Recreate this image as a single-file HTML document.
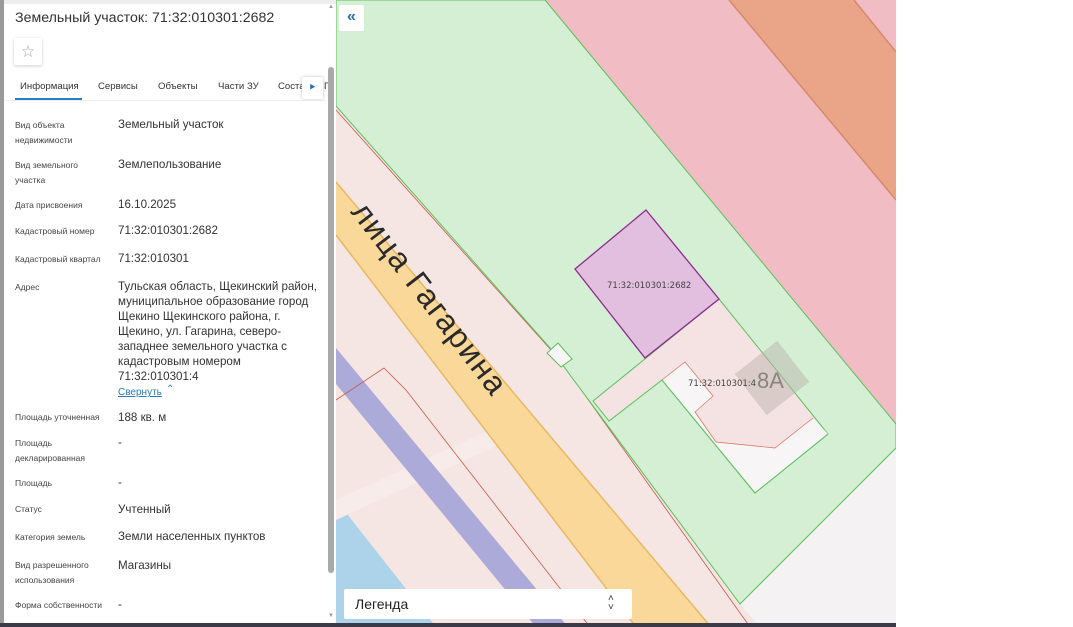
<!DOCTYPE html>
<html><head><meta charset="utf-8"><style>
*{margin:0;padding:0;box-sizing:border-box}
body{width:1073px;height:627px;overflow:hidden;background:#fff;font-family:"Liberation Sans","Noto Sans CJK SC",sans-serif;position:relative}
.p{position:absolute;white-space:nowrap}
.l{font-size:8.5px;color:#444;line-height:15px;left:15px}
.v{font-size:11.6px;color:#333;line-height:15px;left:118px}
.t{font-size:9.6px;color:#333;top:81px}
</style></head><body>
<div class="p" style="left:0;top:0;width:4px;height:627px;background:#9a9a9a"></div>
<div class="p" style="left:4px;top:0;width:332px;height:4px;background:#eee"></div>
<div class="p" style="left:15px;top:10px;font-size:14.2px;color:#333">Земельный участок: 71:32:010301:2682</div>
<div class="p" style="left:14px;top:38px;width:28px;height:27px;background:#fff;box-shadow:0 1px 3px rgba(0,0,0,.2);border-radius:2px;color:#aaa;font-size:13px;text-align:center;line-height:27px">☆</div>
<div class="p t" style="left:20px">Информация</div>
<div class="p t" style="left:98px">Сервисы</div>
<div class="p t" style="left:158px">Объекты</div>
<div class="p t" style="left:218px">Части ЗУ</div>
<div class="p t" style="left:278px">Соста</div>
<div class="p t" style="left:324px">Г</div>
<div class="p" style="left:302px;top:77px;width:21px;height:22px;background:#fff;box-shadow:0 0 3px rgba(0,0,0,.25);border-radius:2px;color:#2b6cb0;font-size:6px;text-align:center;line-height:22px">▶</div>
<div class="p" style="left:4px;top:100px;width:322px;height:1px;background:#eee"></div>
<div class="p" style="left:15px;top:98px;width:67px;height:2px;background:#2b7bc0"></div>
<div class="p" style="left:328px;top:4px;color:#999;font-size:6px">▲</div>
<div class="p" style="left:328px;top:67px;width:6px;height:506px;background:#a9a9a9;border-radius:3px"></div>
<div class="p" style="left:328px;top:613px;color:#999;font-size:6px">▼</div>

<div class="p l" style="top:118px">Вид объекта<br>недвижимости</div><div class="p v" style="top:117px">Земельный участок</div>
<div class="p l" style="top:158px">Вид земельного<br>участка</div><div class="p v" style="top:157px">Землепользование</div>
<div class="p l" style="top:198px">Дата присвоения</div><div class="p v" style="top:197px">16.10.2025</div>
<div class="p l" style="top:224px">Кадастровый номер</div><div class="p v" style="top:223px">71:32:010301:2682</div>
<div class="p l" style="top:252px">Кадастровый квартал</div><div class="p v" style="top:251px">71:32:010301</div>
<div class="p l" style="top:280px">Адрес</div><div class="p v" style="top:279px">Тульская область, Щекинский район,<br>муниципальное образование город<br>Щекино Щекинского района, г.<br>Щекино, ул. Гагарина, северо-<br>западнее земельного участка с<br>кадастровым номером<br>71:32:010301:4</div>
<div class="p" style="left:118px;top:385px;font-size:10px;color:#2b7bc0;text-decoration:underline;line-height:15px">Свернуть</div><div class="p" style="left:166px;top:384px;font-size:10px;color:#2b7bc0">⌃</div>
<div class="p l" style="top:410px">Площадь уточненная</div><div class="p v" style="top:410px">188 кв. м</div>
<div class="p l" style="top:436px">Площадь<br>декларированная</div><div class="p v" style="top:435px">-</div>
<div class="p l" style="top:476px">Площадь</div><div class="p v" style="top:475px">-</div>
<div class="p l" style="top:502px">Статус</div><div class="p v" style="top:502px">Учтенный</div>
<div class="p l" style="top:530px">Категория земель</div><div class="p v" style="top:529px">Земли населенных пунктов</div>
<div class="p l" style="top:558px">Вид разрешенного<br>использования</div><div class="p v" style="top:558px">Магазины</div>
<div class="p l" style="top:598px">Форма собственности</div><div class="p v" style="top:597px">-</div>

<svg class="p" style="left:0;top:0" width="1073" height="627" viewBox="0 0 1073 627">
<defs><clipPath id="m"><rect x="336" y="0" width="560" height="623"/></clipPath></defs>
<g clip-path="url(#m)">
<rect x="336" y="0" width="560" height="627" fill="#f5e6e3"/>
<polygon points="545,0 896,0 896,424" fill="#f2bcc4"/>
<polygon points="729,0 854,0 896,52 896,200" fill="#eaa588"/>
<line x1="729" y1="0" x2="896" y2="200" stroke="#d48a6a" stroke-width="1.5"/>
<line x1="854" y1="0" x2="896" y2="52" stroke="#d48a6a" stroke-width="1.5"/>
<polygon points="740,604 896,448 896,627 760,627" fill="#f4f2f2"/>
<polygon points="336,500 436,627 336,627" fill="#acd3ea"/>
<polygon points="336,500 490,430 496,446 336,520" fill="#f7ecea"/>
<polygon points="336,348 568,627 536,627 336,384" fill="#abaad8"/>
<polygon points="336,182 711,627 636,627 336,235" fill="#f9d89a"/>
<line x1="336" y1="182" x2="711" y2="627" stroke="#e8b860" stroke-width="1.5"/>
<line x1="336" y1="235" x2="636" y2="627" stroke="#e8b860" stroke-width="1.5"/>
<polyline points="336,400 384,368 406,390 590,627" fill="none" stroke="#c9584a" stroke-width="0.8"/>
<polyline points="336,110 560,360 750,627" fill="none" stroke="#c9584a" stroke-width="0.8"/>
<polygon points="336,0 545,0 896,424 896,448 740,604 550,348 336,106" fill="#d4efd4" stroke="#5cbf5c" stroke-width="1"/>
<polygon points="593,401 719,299 828,434 755,493 662,380 609,421" fill="#f4e3e2" stroke="#5cbf5c" stroke-width="1"/>
<polygon points="662,380 685,362 713,396 695,412 716,442 775,448 813,418 828,434 755,493" fill="#f7f5f5"/>
<polyline points="662,380 685,362 713,396 695,412 716,442 775,448 813,418" fill="none" stroke="#d9705f" stroke-width="0.7"/>
<polyline points="662,380 755,493 828,434" fill="none" stroke="#5cbf5c" stroke-width="1"/>
<g transform="rotate(-38 772 378)"><rect x="745" y="352" width="54" height="52" fill="#b8b0a8" opacity="0.45"/></g>
<text x="757" y="388" font-size="22" fill="#8a8480" font-family="Liberation Sans">8A</text>
<polygon points="575,269 646,210 719,299 645,358" fill="#e3bfdf" stroke="#8b2a8b" stroke-width="1.3"/>
<polygon points="547,353 558,343 572,359 561,367" fill="#f7f5f5" stroke="#5cbf5c" stroke-width="1"/>
<text x="607" y="288" font-size="8.5" fill="#444" font-family="DejaVu Sans">71:32:010301:2682</text>
<text x="688" y="386" font-size="8.5" fill="#444" font-family="DejaVu Sans">71:32:010301:4</text>
<text transform="translate(350,212) rotate(52.5)" font-size="32" fill="#2a2a2a" font-family="Liberation Sans" letter-spacing="1.5">лица  Гагарина</text>
</g>
<rect x="0" y="623" width="896" height="4" fill="#3a3a48"/>
</svg>
<div class="p" style="left:339px;top:5px;width:25px;height:26px;background:#fff;border-radius:2px;color:#2b6cb0;font-size:16px;font-weight:bold;text-align:center;line-height:24px">«</div>
<div class="p" style="left:344px;top:589px;width:288px;height:30px;background:#fff;border-radius:2px"></div>
<div class="p" style="left:355px;top:596px;font-size:14px;color:#222">Легенда</div>
<div class="p" style="left:608px;top:594px;font-size:10px;color:#333;line-height:9px;text-align:center">˄<br>˅</div>
</body></html>
